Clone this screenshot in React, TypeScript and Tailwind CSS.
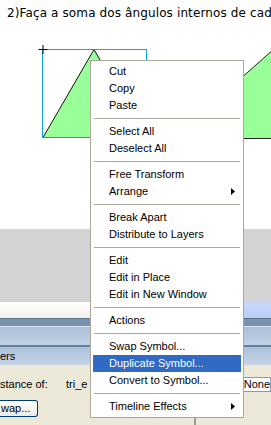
import React from 'react';

type Item = { label: string; sub?: boolean; active?: boolean } | 'sep';

const menu: Item[] = [
  { label: 'Cut' },
  { label: 'Copy' },
  { label: 'Paste' },
  'sep',
  { label: 'Select All' },
  { label: 'Deselect All' },
  'sep',
  { label: 'Free Transform' },
  { label: 'Arrange', sub: true },
  'sep',
  { label: 'Break Apart' },
  { label: 'Distribute to Layers' },
  'sep',
  { label: 'Edit' },
  { label: 'Edit in Place' },
  { label: 'Edit in New Window' },
  'sep',
  { label: 'Actions' },
  'sep',
  { label: 'Swap Symbol...' },
  { label: 'Duplicate Symbol...', active: true },
  { label: 'Convert to Symbol...' },
  'sep',
  { label: 'Timeline Effects', sub: true },
];

function Stage() {
  return (
    <div className="h-[229px] bg-white flex flex-col">
      <p className="pl-[7px] pt-[6px] h-[20px] leading-[14px] text-[12px] tracking-[0.12px] font-['DejaVu_Sans',sans-serif] whitespace-nowrap text-black">
        2)Faça a soma dos ângulos internos de cada
      </p>
      <svg width="271" height="209" viewBox="0 20 271 209" className="block">
        <polygon points="173,138.5 310,17 310,138.5" fill="#99ff99" stroke="#222" strokeWidth="1" />
        <polygon points="43,137.5 94,49.5 145,137.5" fill="#99ff99" stroke="#111" strokeWidth="1" />
        <rect x="42.5" y="49.5" width="104" height="88" fill="none" stroke="#0aa0f5" strokeWidth="1" />
        <path d="M38.5 49.5 H47.5 M43 45 V54" stroke="#000" strokeWidth="1" />
      </svg>
    </div>
  );
}

function Panels() {
  return (
    <div className="flex flex-col">
      <div className="h-[73px] bg-[#d4d4d4]" />
      <div className="h-[16px] flex">
        <div className="w-[200px] bg-gradient-to-b from-white to-[#f1f0ea]" />
        <div className="flex-1 bg-gradient-to-b from-[#c8d8fc] to-[#bccdf4]" />
      </div>
      <div className="h-[8px] bg-[#7893ad] border-t border-[#5a718a]" />
      <div className="h-[1px] bg-[#dbe4ee]" />
      <div className="h-[18px] bg-gradient-to-b from-[#aabfd9] to-[#c3d2e5]" />
      <div className="h-[2px] bg-[#62809c]" />
      <div className="h-[18px] bg-gradient-to-b from-[#aec2db] to-[#c6d4e6] text-[11px] leading-[18px] text-black">
        ers
      </div>
      <div className="h-[60px] bg-[#ece9d8] flex text-[11px] text-black">
        <div className="w-[198px] flex flex-col pt-[12px]">
          <div className="h-[15px] flex items-center">
            <span className="w-[66px]">stance of:</span>
            <span>tri_e</span>
          </div>
          <button className="mt-[8px] h-[17px] w-[38px] flex items-center pl-[1px] rounded-r-[3px] border border-l-0 border-[#003c74] bg-gradient-to-b from-white to-[#ecebe6] text-[11px] leading-none">
            wap...
          </button>
        </div>
        <div className="w-[2px] bg-[#a19e91]" />
        <div className="flex-1 pl-[45px] pt-[12px]">
          <div className="h-[15px] border border-[#7f9db9] bg-white pl-[2px] text-[11px] leading-[13px] whitespace-nowrap overflow-hidden">
            None
          </div>
        </div>
      </div>
    </div>
  );
}

function ContextMenu() {
  return (
    <div className="absolute left-[90px] top-[60px] w-[154px] border border-[#aca899] bg-white py-[2px] px-[2px] text-[11px] text-black">
      {menu.map((item, i) =>
        item === 'sep' ? (
          <div key={i} className="h-[9px] flex items-center px-[1px]">
            <div className="h-[1px] w-full bg-[#aca899]" />
          </div>
        ) : (
          <div
            key={i}
            className={`h-[17px] flex items-center justify-between pl-[16px] pr-[6px] leading-[17px] whitespace-nowrap ${
              item.active ? 'bg-[#316ac5] text-white' : ''
            }`}
          >
            <span>{item.label}</span>
            {item.sub && (
              <svg width="4" height="7" viewBox="0 0 4 7">
                <path d="M0 0 L4 3.5 L0 7 Z" fill="#000" />
              </svg>
            )}
          </div>
        )
      )}
    </div>
  );
}

export default function App() {
  return (
    <div className="relative w-[271px] h-[425px] overflow-hidden bg-white font-['Liberation_Sans',Arial,sans-serif]">
      <Stage />
      <Panels />
      <ContextMenu />
    </div>
  );
}
